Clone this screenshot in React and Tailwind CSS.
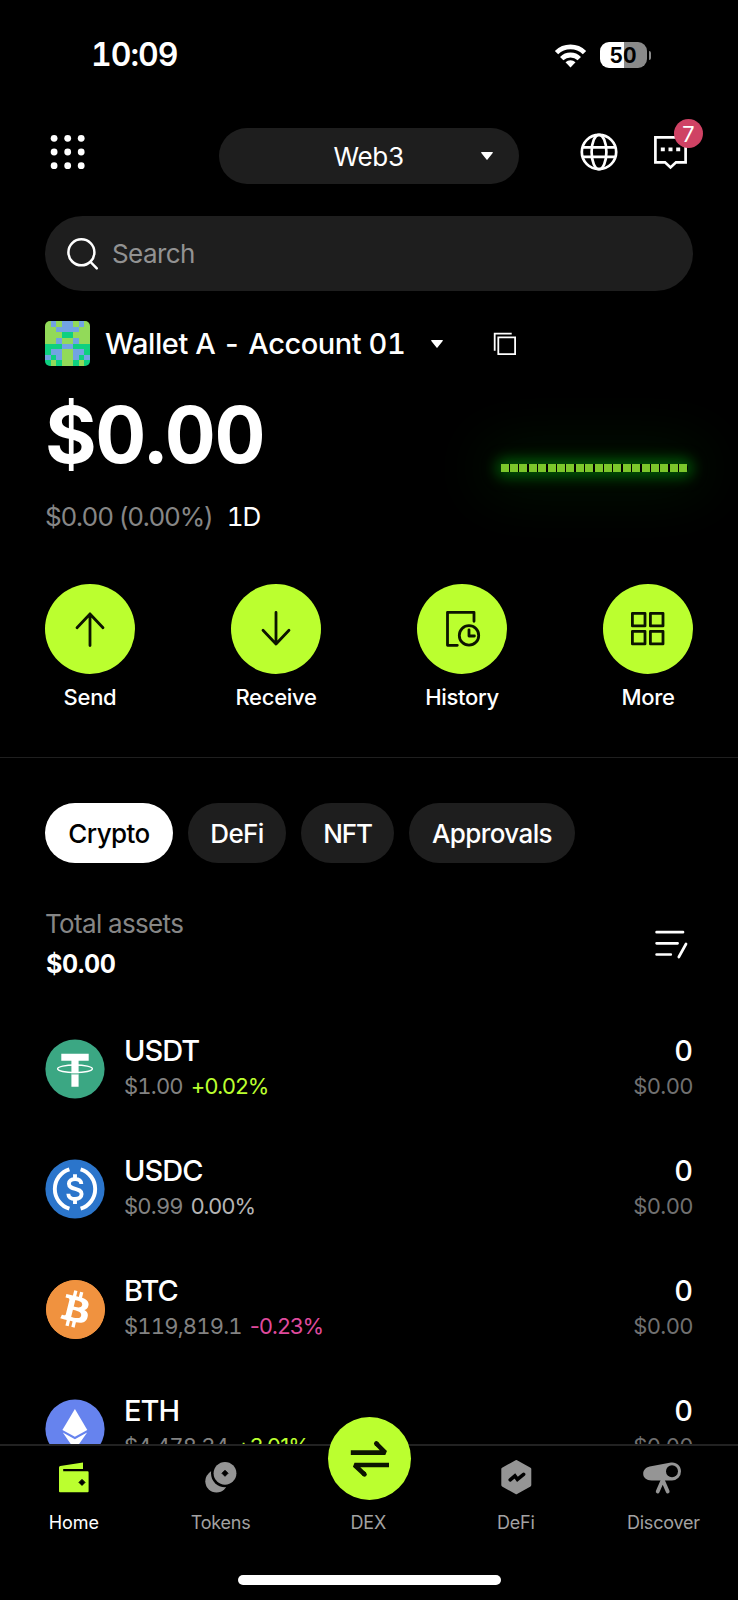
import React from "react";
import { SiBitcoin } from "react-icons/si";

const CELLS = [
  "LBLBBLBL",
  "LLBBBBLL",
  "LLLGGLLL",
  "LLBLLBLL",
  "GGGBBGGG",
  "GBBLLBBG",
  "BGBLLBGB",
  "GLGLLGLG",
];
const CELL_COLORS = { L: "#92da59", B: "#72a3e3", G: "#0ed080" };

function Avatar() {
  return (
    <svg className="h-[45px] w-[45px] rounded-[5px]" viewBox="0 0 8 8" shapeRendering="crispEdges">
      {CELLS.map((row, y) =>
        [...row].map((c, x) => <rect key={`${x}-${y}`} x={x} y={y} width="1.02" height="1.02" fill={CELL_COLORS[c]} />)
      )}
    </svg>
  );
}

function StatusBar() {
  return (
    <div className="flex h-[110px] shrink-0 items-center justify-between pr-[87px] pl-[91px]">
      <span className="text-[32px] leading-none font-semibold tracking-[-1px]">10:09</span>
      <div className="flex items-center">
        <svg className="mr-[13px] h-[25px] w-[33px]" viewBox="0 0 33 25" fill="none" stroke="#fff" strokeWidth="4.8">
          <path d="M2.5 9.600a20 20 0 0 1 28 0" />
          <path d="M7.700 15.600a12.600 12.600 0 0 1 17.600 0" />
          <path d="M16.500 24.400l-5-5.200a7.200 7.200 0 0 1 10 0z" fill="#fff" stroke="none" />
        </svg>
        <div className="flex h-[26px] w-[47px] items-center justify-center rounded-[9px] bg-linear-to-r from-white from-50% to-[#8a8a8a] to-50% text-[21px] leading-none font-bold text-black">
          50
        </div>
        <div className="ml-[2px] h-[9px] w-[2.5px] rounded-r-full bg-[#8a8a8a]" />
      </div>
    </div>
  );
}

function Caret() {
  return (
    <svg className="h-[8px] w-[12px]" viewBox="0 0 12 8" fill="#fff">
      <path d="M0.8 0h10.4a.6.6 0 0 1 .5 1L6.5 7.6a.6.6 0 0 1-1 0L.3 1a.6.6 0 0 1 .5-1z" />
    </svg>
  );
}

function Header() {
  return (
    <div className="mt-[18px] flex h-[56px] shrink-0 items-center pl-[50px]">
      <svg className="mb-[8px] h-[36px] w-[36px]" viewBox="0 0 36 36" fill="#fff">
        {[4.3, 18, 31.7].map((y) => [4.1, 17.7, 31.2].map((x) => <circle key={`${x}-${y}`} cx={x} cy={y} r="3.4" />))}
      </svg>
      <div className="ml-[133px] flex h-[56px] w-[300px] items-center rounded-full bg-[#1e1e1e] pr-[26px]">
        <span className="ml-[26px] flex-1 pl-[12px] text-center text-[26px] tracking-[-0.3px]">Web3</span>
        <Caret />
      </div>
      <svg className="mb-[8px] ml-[60px] h-[40px] w-[40px]" viewBox="0 0 40 40" fill="none" stroke="#fff" strokeWidth="2.7">
        <circle cx="20" cy="20" r="17.200" />
        <ellipse cx="20" cy="20" rx="7.4" ry="17.200" />
        <path d="M4 15.300h32M4 24.900h32" />
      </svg>
      <div className="relative mb-[8px] ml-[32px] h-[40px] w-[40px]">
        <svg className="h-[40px] w-[40px]" viewBox="0 0 40 40" fill="none" stroke="#fff" strokeWidth="2.7">
          <path d="M4.400 5.300h30.200v25h-9.600l-5.500 5.200-5.500-5.200H4.400z" />
          <path d="M9.800 17.300h4M17.500 17.300h4M25.200 17.300h4" strokeWidth="3.800" />
        </svg>
        <div className="absolute top-[-13px] left-[23px] flex h-[29px] w-[29px] items-center justify-center rounded-full bg-[#cf4264] text-[22px] leading-none">
          7
        </div>
      </div>
    </div>
  );
}

function SearchBar() {
  return (
    <div className="mt-[32px] flex h-[75px] shrink-0 items-center rounded-full bg-[#1e1e1e] pl-[21px]">
      <svg className="h-[34px] w-[34px]" viewBox="0 0 34 34" fill="none" stroke="#fff" strokeWidth="2.5" strokeLinecap="round">
        <circle cx="15.400" cy="15.300" r="13" />
        <path d="M24.600 25l6.200 6.400" />
      </svg>
      <span className="ml-[12px] text-[26px] tracking-[-0.6px] text-[#929292]">Search</span>
    </div>
  );
}

function Balance() {
  return (
    <>
      <div className="mt-[30px] flex h-[45px] shrink-0 items-center">
        <Avatar />
        <span className="ml-[15px] w-[300px] text-[29px] font-medium tracking-[-0.45px] whitespace-nowrap">Wallet A - Account 01</span>
        <div className="ml-[25.5px] flex">
          <Caret />
        </div>
        <svg className="ml-[50px] h-[24px] w-[24px]" viewBox="0 0 24 24" fill="none" stroke="#fff" strokeWidth="1.8">
          <path d="M5.3 5.4h16.8v16.8H5.3z" />
          <path d="M1.700 18.700V1.700h17" />
        </svg>
      </div>
      <div className="flex h-[174px] shrink-0 justify-between pr-[5.5px]">
        <div className="flex flex-col">
          <span className="mt-[28px] text-[79px] leading-[80px] font-bold tracking-[-1.4px]">$0.00</span>
          <div className="mt-[27px] flex items-center gap-[14px] text-[26px] leading-[32px]">
            <span className="tracking-[-1.3px] text-[#868686]">$0.00 (0.00%)</span>
            <span className="tracking-[-1px]">1D</span>
          </div>
        </div>
        <div className="mt-[97.5px] flex h-[8px] w-[187px] justify-between rounded-sm shadow-[0_0_14px_5px_rgba(0,105,8,0.85),0_0_60px_18px_rgba(0,70,10,0.3)]">
          {Array.from({ length: 20 }, (_, i) => (
            <div key={i} className="h-[8px] w-[8px] bg-[#7bc62b]" />
          ))}
        </div>
      </div>
    </>
  );
}

const ACTIONS = [
  ["Send", <path d="M20 36.500V5M7 18.800L20 5l13 13.800" />],
  ["Receive", <path d="M20 3.500V35M7 21.200L20 35l13-13.800" />],
  [
    "History",
    <>
      <path d="M15.300 36.300H5.500V3.300h26.500v9" />
      <circle cx="27" cy="26.400" r="9.700" />
      <path d="M27 20.800v6.200h5.400" />
    </>,
  ],
  ["More", <path d="M4.400 4.300h12.600v12.600H4.400zM22.400 4.300h12.600v12.600H22.400zM4.400 22.300h12.600v12.600H4.400zM22.400 22.300h12.600v12.600H22.400z" />],
];

function Actions() {
  return (
    <div className="mt-[44px] flex shrink-0 justify-between">
      {ACTIONS.map(([label, icon]) => (
        <div key={label} className="flex w-[90px] flex-col items-center">
          <div className="flex h-[90px] w-[90px] items-center justify-center rounded-full bg-[#bbff2f]">
            <svg className="h-[40px] w-[40px]" viewBox="0 0 40 40" fill="none" stroke="#0c1400" strokeWidth="2.800" strokeLinejoin="round" strokeLinecap="round">
              {icon}
            </svg>
          </div>
          <span className="mt-[9px] text-[22px] leading-[28px] font-medium tracking-[-0.3px]">{label}</span>
        </div>
      ))}
    </div>
  );
}

function Tabs() {
  return (
    <div className="mt-[45px] flex h-[60px] shrink-0 gap-[15px] text-[26px] font-medium tracking-[-0.6px]">
      <div className="flex w-[128px] items-center justify-center rounded-full bg-white text-black">Crypto</div>
      <div className="flex w-[98px] items-center justify-center rounded-full bg-[#1e1e1e]">DeFi</div>
      <div className="flex w-[93px] items-center justify-center rounded-full bg-[#1e1e1e] tracking-[-1.2px]">NFT</div>
      <div className="flex w-[166px] items-center justify-center rounded-full bg-[#1e1e1e]">Approvals</div>
    </div>
  );
}

function Totals() {
  return (
    <div className="mt-[45px] flex h-[73px] shrink-0 justify-between pr-[4px]">
      <div className="flex flex-col">
        <span className="text-[26px] leading-[32px] tracking-[-0.65px] text-[#868686]">Total assets</span>
        <span className="mt-[8px] pl-[1px] text-[25px] leading-[32px] font-bold tracking-[-0.4px]">$0.00</span>
      </div>
      <svg className="mt-[18px] h-[36px] w-[36px]" viewBox="0 0 36 36" fill="none" stroke="#fff" strokeWidth="2.700" strokeLinecap="round">
        <path d="M3.600 6.200h26.400M3.600 17.300h21M3.600 28.500h14.200M25.800 31l7.200-13" />
      </svg>
    </div>
  );
}

const COIN_ICONS = {
  USDT: (
    <svg className="h-[60px] w-[60px]" viewBox="0 0 60 60">
      <circle cx="30" cy="30" r="29.600" fill="#3ba783" />
      <path d="M16.300 14.800h27.400v7H33.600v26h-7.200v-26H16.300z" fill="#fff" />
      <ellipse cx="30" cy="29.800" rx="17.400" ry="3.800" fill="none" stroke="#fff" strokeWidth="1.400" />
      <path d="M26.200 34.900h7.600" stroke="#3ba783" strokeWidth="1" />
    </svg>
  ),
  USDC: (
    <svg className="h-[60px] w-[60px]" viewBox="0 0 60 60" fill="none" stroke="#fff" strokeWidth="3.900">
      <circle cx="30" cy="30" r="29.600" fill="#2b75cb" stroke="none" />
      <path d="M24.400 10.300a20.600 20.600 0 0 0 0 39.400M35.600 10.300a20.600 20.600 0 0 1 0 39.400" />
      <path d="M36.300 24.900c0-3-2.400-4.900-6.200-4.900-3.700 0-6.200 1.800-6.200 4.700 0 6.900 12.700 3.400 12.700 10.300 0 3.100-2.700 5-6.600 5-4 0-6.700-2-6.700-5.300M30 15.300V20M30 40v5" />
    </svg>
  ),
  BTC: (
    <div className="flex h-[60px] w-[60px] items-center justify-center">
      <SiBitcoin className="h-[59px] w-[59px] rounded-full bg-[radial-gradient(white_66%,#f0923f_67%)] text-[#f0923f]" />
    </div>
  ),
  ETH: (
    <svg className="h-[60px] w-[60px]" viewBox="0 0 60 60" fill="#fff">
      <circle cx="30" cy="30" r="29.600" fill="#6683ee" />
      <path d="M29.900 10L42.300 31l-12.400 6.700L17.400 31z" />
      <path d="M17.800 33.500l12.100 6.800 12.200-6.800L29.900 51z" />
    </svg>
  ),
};

const COINS = [
  { name: "USDT", price: "$1.00", change: "+0.02%", color: "text-[#bbff2f]" },
  { name: "USDC", price: "$0.99", change: "0.00%", color: "text-[#b4b4b4]" },
  { name: "BTC", price: "$119,819.1", change: "-0.23%", color: "text-[#df4a9c]" },
  { name: "ETH", price: "$4,478.34", change: "+3.01%", color: "text-[#bbff2f]" },
];

function CoinRow({ coin }) {
  return (
    <div className="flex h-[120px] shrink-0 items-start">
      <div className="mt-[19px]">{COIN_ICONS[coin.name]}</div>
      <div className="mt-[12px] ml-[17px] flex flex-1 flex-col pl-[2px]">
        <span className="text-[29px] leading-[38px] font-medium tracking-[-1px]">{coin.name}</span>
        <div className="mt-px flex gap-[8px] text-[22px] leading-[30px] tracking-[-0.8px]">
          <span className="text-[#828282]">{coin.price}</span>
          <span className={`proportional-nums ${coin.color}`}>{coin.change}</span>
        </div>
      </div>
      <div className="mt-[12px] flex flex-col text-right">
        <span className="text-[29px] leading-[38px] font-medium">0</span>
        <span className="mt-px text-[22px] leading-[30px] tracking-[-0.6px] text-[#707070]">$0.00</span>
      </div>
    </div>
  );
}

const NAV = [
  [
    "Home",
    <g fill="#bbff2f">
      <path d="M5 10.800V8.400a1.500 1.500 0 0 1 1.200-1.400L29 3.400v6.500H9.200v2.400h24.400a1 1 0 0 1 1 1v19a1 1 0 0 1-1 1H6a1 1 0 0 1-1-1z" />
      <path d="M28 19.900l3 3-3 3-3-3z" fill="#000" stroke="#000" strokeLinejoin="round" transform="translate(0 .5)" />
    </g>,
  ],
  [
    "Tokens",
    <g fill="#959595">
      <circle cx="15.500" cy="22.300" r="11.200" />
      <circle cx="24" cy="14.300" r="14" fill="#000" />
      <circle cx="24" cy="14.300" r="11.400" />
      <path d="M24 11.300l3 3-3 3-3-3z" fill="#000" stroke="#000" strokeLinejoin="round" />
    </g>,
  ],
  ["DEX", null],
  [
    "DeFi",
    <g>
      <path d="M19.300 2.500l13.500 7.600v16L19.300 33.800 5.800 26.100v-16z" fill="#959595" stroke="#959595" strokeWidth="3" strokeLinejoin="round" />
      <path d="M13.200 20.900l4.700-4 2.500 3.400L26.600 15.300" fill="none" stroke="#000" strokeWidth="3.600" strokeLinecap="round" />
    </g>,
  ],
  [
    "Discover",
    <g>
      <path d="M27 3.500c5.200-.8 10 3.200 10 8.700a9 9 0 0 1-9 9.200H7.500C2.500 21.400-.8 18.800-.8 14.800c0-3.600 2.400-6.400 6.500-7.300z" fill="#959595" />
      <circle cx="28" cy="12.300" r="6" fill="#000" />
      <path d="M18.700 21l-5 11.500M18.700 21l5 11.500" stroke="#959595" strokeWidth="3.800" strokeLinecap="round" />
    </g>,
  ],
];

function BottomNav() {
  return (
    <nav className="relative flex h-[156px] shrink-0 flex-col items-center border-t-2 border-[#222] bg-black">
      <div className="flex w-full pt-[13px]">
        {NAV.map(([label, icon]) => (
          <div key={label} className="flex flex-1 flex-col items-center">
            <svg className="h-[40px] w-[40px] overflow-visible" viewBox="0 0 40 40" fill="none">
              {icon}
            </svg>
            <span
              className={
                label === "Home"
                  ? "mt-[12px] text-[18px] leading-[24px] tracking-[-0.1px]"
                  : "mt-[12px] pr-[1.5px] text-[18px] leading-[24px] tracking-[-0.2px] text-[#a2a2a2]"
              }
            >
              {label}
            </span>
          </div>
        ))}
      </div>
      <div className="absolute top-[-29px] flex h-[83px] w-[83px] items-center justify-center rounded-full bg-[#bbff2f]">
        <svg className="h-[44px] w-[44px]" viewBox="0 0 44 44" fill="none" stroke="#0c1400" strokeWidth="4.600" strokeLinejoin="bevel">
          <path d="M3.800 15.600h34.500L29.300 6.500M42 28H7.500L17.500 37.400" />
          <path d="M30 7.200l-.7-.7M16.800 36.700l.7.700" strokeLinecap="round" />
        </svg>
      </div>
      <div className="mt-[40px] h-[10px] w-[263px] rounded-full bg-white" />
    </nav>
  );
}

export default function App() {
  return (
    <div className="flex h-[1600px] w-[738px] flex-col overflow-hidden bg-black font-['Inter',sans-serif] text-white tabular-nums">
      <main className="flex h-[1444px] shrink-0 flex-col overflow-hidden">
        <StatusBar />
        <Header />
        <section className="flex shrink-0 flex-col px-[45px]">
          <SearchBar />
          <Balance />
          <Actions />
        </section>
        <div className="mt-[46px] h-px shrink-0 bg-[#1f1f1f]" />
        <section className="flex shrink-0 flex-col px-[45px]">
          <Tabs />
          <Totals />
          <div className="mt-[39px] flex flex-col">
            {COINS.map((coin) => (
              <CoinRow key={coin.name} coin={coin} />
            ))}
          </div>
        </section>
      </main>
      <BottomNav />
    </div>
  );
}
